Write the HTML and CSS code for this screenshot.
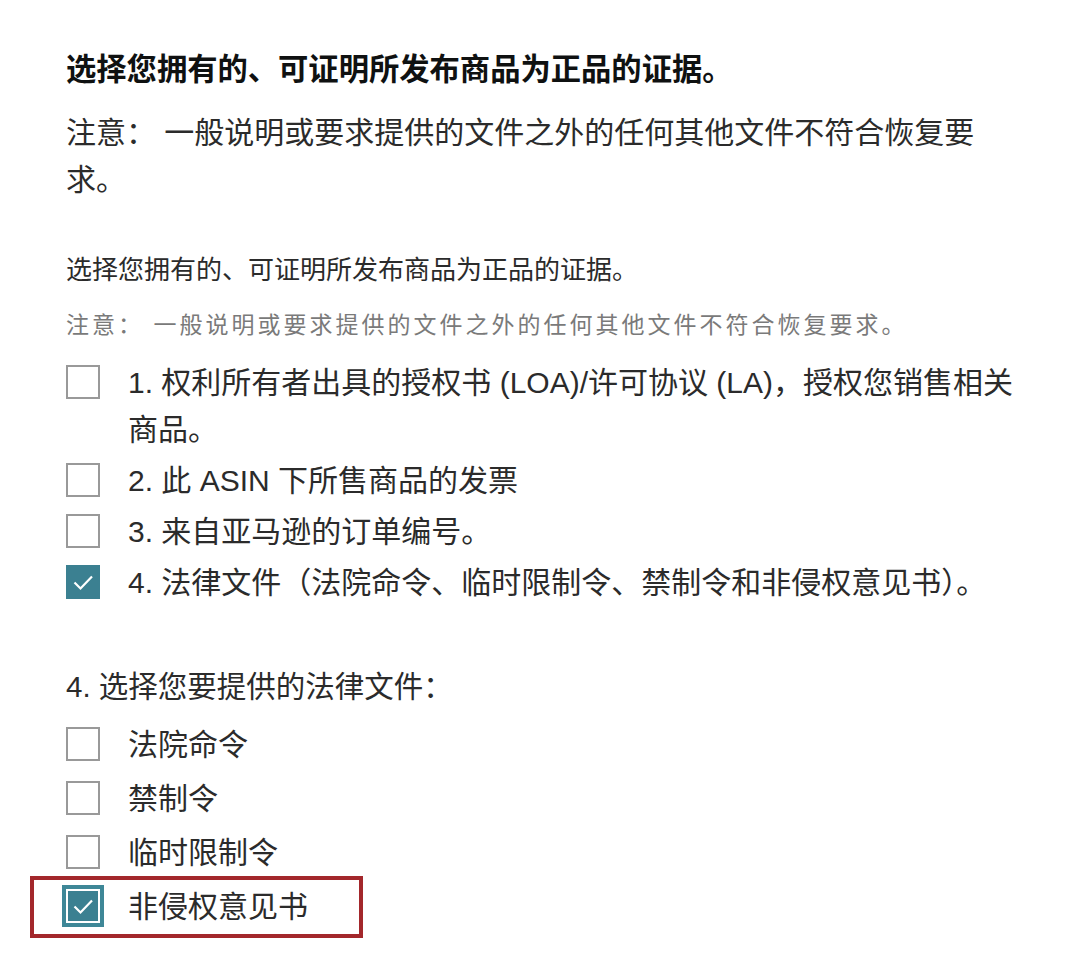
FILE: index.html
```html
<!DOCTYPE html>
<html lang="zh-CN">

<head>
    <meta charset="UTF-8">
    <meta name="viewport" content="width=device-width, initial-scale=1.0">
    <title>正品证据</title>
    <link rel="stylesheet" href="styles.css">
</head>

<body>
    <div class="wrap">
        <h2 class="title">选择您拥有的、可证明所发布商品为正品的证据。</h2>
        <p class="notice">注意： 一般说明或要求提供的文件之外的任何其他文件不符合恢复要求。</p>

        <div class="section-title">选择您拥有的、可证明所发布商品为正品的证据。</div>
        <div class="hint">注意： 一般说明或要求提供的文件之外的任何其他文件不符合恢复要求。</div>

        <!-- 证据类型 -->
        <ul class="check-list evidence">
            <li>
                <span class="box"></span>
                <span class="label">1. 权利所有者出具的授权书 (LOA)/许可协议 (LA)，授权您销售相关商品。</span>
            </li>
            <li>
                <span class="box"></span>
                <span class="label">2. 此 ASIN 下所售商品的发票</span>
            </li>
            <li>
                <span class="box"></span>
                <span class="label">3. 来自亚马逊的订单编号。</span>
            </li>
            <li>
                <span class="box checked">
                    <svg viewBox="0 0 34 34"><path d="M8.5 17.5l6 6L26 11.5"/></svg>
                </span>
                <span class="label">4. 法律文件（法院命令、临时限制令、禁制令和非侵权意见书）。</span>
            </li>
        </ul>

        <div class="question">4. 选择您要提供的法律文件：</div>

        <!-- 法律文件 -->
        <ul class="check-list legal">
            <li>
                <span class="box"></span>
                <span class="label">法院命令</span>
            </li>
            <li>
                <span class="box"></span>
                <span class="label">禁制令</span>
            </li>
            <li>
                <span class="box"></span>
                <span class="label">临时限制令</span>
            </li>
            <li class="highlight">
                <span class="box checked focus">
                    <svg viewBox="0 0 34 34"><path d="M8.5 17.5l6 6L26 11.5"/></svg>
                </span>
                <span class="label">非侵权意见书</span>
            </li>
        </ul>
    </div>
</body>

</html>
```

FILE: styles.css
```css
* {
    padding: 0;
    margin: 0;
    box-sizing: border-box;
}

html,
body {
    width: 100%;
    height: 100%;
    background: #FFFFFF;
}

body {
    font-family: "Liberation Sans", "Noto Sans CJK SC", sans-serif;
    color: #333333;
}

.wrap {
    padding: 50px 0 0 66px;
    width: 1030px;
}

.title {
    font-size: 30.3px;
    line-height: 40px;
    font-weight: 700;
    color: #0F1111;
}

.notice {
    margin-top: 19px;
    max-width: 935px;
    font-size: 30px;
    line-height: 47px;
    color: #2B2B2B;
}

.section-title {
    margin-top: 49px;
    font-size: 26px;
    line-height: 36px;
    color: #2B2B2B;
}

.hint {
    margin-top: 22px;
    font-size: 23px;
    line-height: 30px;
    letter-spacing: 3px;
    color: #7A7A7A;
}

.check-list {
    list-style: none;
    display: flex;
    flex-direction: column;
}

.check-list li {
    display: flex;
    align-items: flex-start;
    gap: 28px;
    font-size: 30px;
    line-height: 47px;
    color: #2B2B2B;
}

.evidence {
    margin-top: 19px;
    gap: 4px;
}

.legal {
    margin-top: 11px;
    gap: 7px;
}

.box {
    flex: none;
    width: 34px;
    height: 34px;
    margin-top: 6px;
    border: 2px solid #999999;
    background: #FFFFFF;
}

.box.checked {
    border-color: #3B8091;
    background: #3B8091;
}

.box svg {
    display: block;
    margin: -2px;
    width: 34px;
    height: 34px;
}

.box svg path {
    fill: none;
    stroke: #FFFFFF;
    stroke-width: 2.2;
}

.box.focus {
    border-color: #FFFFFF;
    box-shadow: 0 0 0 4px #3E8797;
}

.question {
    margin-top: 57px;
    font-size: 29.5px;
    line-height: 47px;
    color: #2B2B2B;
}

.highlight {
    width: 333px;
    margin: -7.5px 0 -7.5px -36px;
    padding: 3.5px 0 3.5px 32px;
    border: 4px solid #A3272B;
}
```
